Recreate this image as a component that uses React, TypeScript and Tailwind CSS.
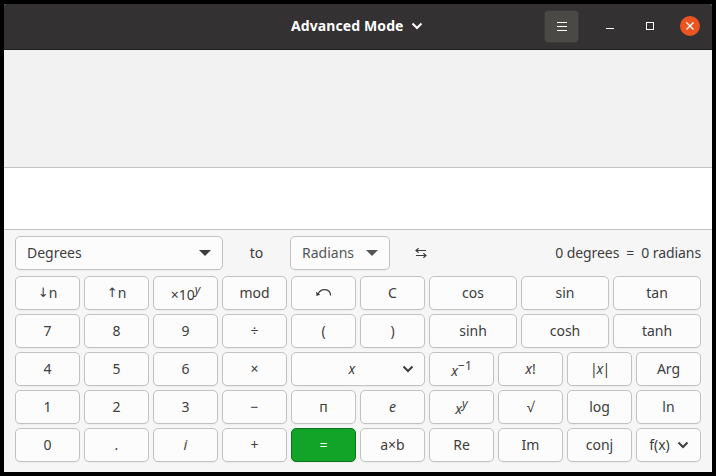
import type { ReactNode } from "react";

function Chevron({ className = "" }: { className?: string }) {
  return (
    <svg width="12" height="8" viewBox="0 0 12 8" fill="none" className={`shrink-0 ${className}`}>
      <path d="M1.5 1.5 L6 6 L10.5 1.5" stroke="currentColor" strokeWidth="2" />
    </svg>
  );
}

function Triangle() {
  return (
    <svg width="12" height="6" viewBox="0 0 12 6">
      <path d="M0 0 H12 L6 6 Z" fill="currentColor" />
    </svg>
  );
}

function Key({ children, className = "" }: { children?: ReactNode; className?: string }) {
  return (
    <button
      className={`flex h-[34px] items-center justify-center rounded-[5px] border border-[#c2c2c2] bg-[#fcfcfc] pb-px whitespace-pre shadow-[0_1px_1px_rgba(0,0,0,0.04)] ${className}`}
    >
      {children}
    </button>
  );
}

function Power({ base, exponent }: { base: ReactNode; exponent: ReactNode }) {
  return (
    <span className="flex items-start leading-5">
      <span className="pt-[4px]">{base}</span>
      <span className="pt-px text-[12px] leading-4">{exponent}</span>
    </span>
  );
}

function ArrowN({ up = false }: { up?: boolean }) {
  return (
    <span className="flex items-center gap-[2px]">
      <span className="w-[9px] text-center font-['DejaVu_Sans'] text-[13px] leading-5">{up ? "↑" : "↓"}</span>
      <span>n</span>
    </span>
  );
}

function UndoIcon() {
  return (
    <svg width="16" height="10" viewBox="0 0 16 10" fill="none">
      <path d="M2 6.5 C4 0 14.2 -0.5 14.6 7.5" stroke="#3d3d3d" strokeWidth="1.2" />
      <path d="M0.2 3.8 L0.4 8 L4.2 6.8 Z" fill="#3d3d3d" />
    </svg>
  );
}

function SwapIcon() {
  return (
    <svg width="12" height="10" viewBox="0 0 12 10" fill="none" stroke="#3d3d3d" strokeWidth="1.2">
      <path d="M11 2.5 H1 M3.6 0.2 L1 2.5 L3.6 4.8 M1 7.5 H11 M8.4 5.2 L11 7.5 L8.4 9.8" />
    </svg>
  );
}

export default function App() {
  return (
    <div className="h-[476px] w-[716px] overflow-hidden bg-black p-1 font-['Noto_Sans','Open_Sans',sans-serif] text-[14px] leading-5 text-[#3d3d3d]">
      <div className="flex h-[468px] w-[708px] flex-col overflow-hidden rounded-t-[2px] bg-[#f6f6f6]">
        <header className="grid h-[46px] shrink-0 grid-cols-[287px_1fr_168px] items-center border-b border-[#1d1c1c] bg-[#333132] text-white">
          <span />
          <div className="flex items-center gap-[7px] pb-px font-bold">
            <span className="tracking-[0.1px] whitespace-nowrap">Advanced Mode</span>
            <Chevron />
          </div>
          <div className="flex items-center pb-px">
            <button className="flex h-[33px] w-[35px] shrink-0 items-center justify-center rounded-[4px] border border-[#3b3a38] bg-[#4a4945]">
              <svg width="10" height="9" viewBox="0 0 10 9">
                <path d="M0 0.5H10M0 4.5H10M0 8.5H10" stroke="white" />
              </svg>
            </button>
            <svg width="8" height="1" className="mt-[4px] ml-[27px] shrink-0">
              <rect width="8" height="1" fill="white" />
            </svg>
            <svg width="8" height="8" className="ml-[32px] shrink-0">
              <rect x="0.5" y="0.5" width="7" height="7" fill="none" stroke="white" />
            </svg>
            <span className="ml-[26px] flex size-[20px] shrink-0 items-center justify-center rounded-full bg-[#e95420]">
              <svg width="8" height="8" viewBox="0 0 8 8">
                <path d="M0.5 0.5L7.5 7.5M7.5 0.5L0.5 7.5" stroke="white" strokeWidth="1.4" />
              </svg>
            </span>
          </div>
        </header>
        <div className="h-[118px] shrink-0 border-b border-[#c2c2c2] bg-[#f2f2f2]" />
        <div className="h-[62px] shrink-0 border-b border-[#c2c2c2] bg-white" />
        <main className="flex flex-col gap-[6px] px-[11px] pt-[6px]">
          <div className="flex h-[34px] items-center">
            <Key className="w-[208px] justify-between! px-[11px]">
              <span>Degrees</span>
              <Triangle />
            </Key>
            <span className="w-[67px] pb-px text-center">to</span>
            <Key className="w-[100px] justify-between! px-[11px] text-[#555]">
              <span>Radians</span>
              <Triangle />
            </Key>
            <span className="ml-[25px] flex">
              <SwapIcon />
            </span>
            <span className="ml-auto pb-px tracking-[-0.09px] whitespace-pre">0 degrees  =  0 radians</span>
          </div>
          <div className="flex gap-1">
            <div className="grid w-[410px] grid-cols-6 gap-1">
              <Key><ArrowN /></Key>
              <Key><ArrowN up /></Key>
              <Key><Power base="×10" exponent={<i>y</i>} /></Key>
              <Key>mod</Key>
              <Key><UndoIcon /></Key>
              <Key>C</Key>
              <Key>7</Key>
              <Key>8</Key>
              <Key>9</Key>
              <Key>÷</Key>
              <Key>(</Key>
              <Key>)</Key>
              <Key>4</Key>
              <Key>5</Key>
              <Key>6</Key>
              <Key>×</Key>
              <Key className="col-span-2 pr-[10px] pl-[10px]">
                <i className="flex-1 text-center">x</i>
                <Chevron />
              </Key>
              <Key>1</Key>
              <Key>2</Key>
              <Key>3</Key>
              <Key>−</Key>
              <Key>п</Key>
              <Key><i>e</i></Key>
              <Key>0</Key>
              <Key>.</Key>
              <Key><i className="pb-px font-['Open_Sans'] text-[15px]">i</i></Key>
              <Key>+</Key>
              <Key className="border-[#0d731a]! bg-[#12a329]! text-white">=</Key>
              <Key>a×b</Key>
            </div>
            <div className="flex w-[272px] flex-col gap-1">
              <div className="grid grid-cols-3 gap-1">
                <Key>cos</Key>
                <Key>sin</Key>
                <Key>tan</Key>
                <Key>sinh</Key>
                <Key>cosh</Key>
                <Key>tanh</Key>
              </div>
              <div className="grid grid-cols-4 gap-1">
                <Key><Power base={<i>x</i>} exponent="−1" /></Key>
                <Key><i>x</i>!</Key>
                <Key><span className="tracking-[-1px]">|<i>x</i>|</span></Key>
                <Key>Arg</Key>
                <Key><Power base={<i>x</i>} exponent={<i>y</i>} /></Key>
                <Key>√</Key>
                <Key>log</Key>
                <Key>ln</Key>
                <Key>Re</Key>
                <Key>Im</Key>
                <Key>conj</Key>
                <Key className="gap-[7px] pl-px">
                  <span>f(x)</span>
                  <Chevron />
                </Key>
              </div>
            </div>
          </div>
        </main>
      </div>
    </div>
  );
}
